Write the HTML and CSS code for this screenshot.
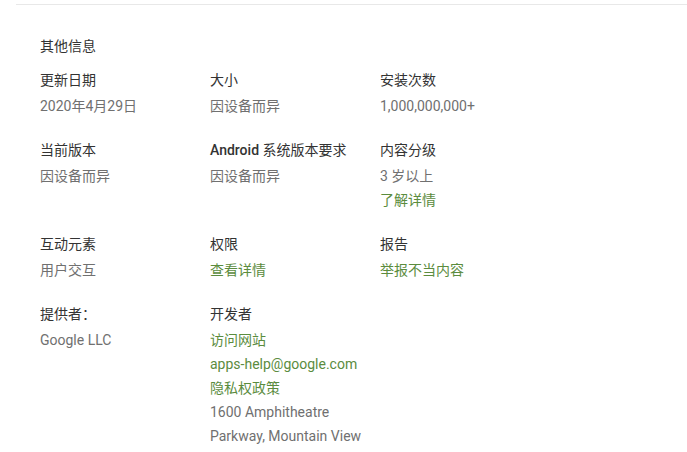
FILE: index.html
```html
<!DOCTYPE html>
<html lang="zh-CN">
<head>
    <meta charset="UTF-8">
    <title>其他信息</title>
    <link rel="stylesheet" href="styles.css">
</head>
<body>
    <div class="divider"></div>

    <div class="info-section">
        <h2>其他信息</h2>

        <div class="info-grid">
            <div class="info-item">
                <div class="label">更新日期</div>
                <div class="value">2020年4月29日</div>
            </div>
            <div class="info-item">
                <div class="label">大小</div>
                <div class="value">因设备而异</div>
            </div>
            <div class="info-item">
                <div class="label">安装次数</div>
                <div class="value">1,000,000,000+</div>
            </div>

            <div class="info-item">
                <div class="label">当前版本</div>
                <div class="value">因设备而异</div>
            </div>
            <div class="info-item">
                <div class="label"><span class="latin">Android</span> 系统版本要求</div>
                <div class="value">因设备而异</div>
            </div>
            <div class="info-item">
                <div class="label">内容分级</div>
                <div class="value">3 岁以上</div>
                <div class="value"><a href="#">了解详情</a></div>
            </div>

            <div class="info-item">
                <div class="label">互动元素</div>
                <div class="value">用户交互</div>
            </div>
            <div class="info-item">
                <div class="label">权限</div>
                <div class="value"><a href="#">查看详情</a></div>
            </div>
            <div class="info-item">
                <div class="label">报告</div>
                <div class="value"><a href="#">举报不当内容</a></div>
            </div>

            <div class="info-item">
                <div class="label">提供者：</div>
                <div class="value">Google LLC</div>
            </div>
            <div class="info-item">
                <div class="label">开发者</div>
                <div class="value"><a href="#">访问网站</a></div>
                <div class="value"><a href="#">apps-help@google.com</a></div>
                <div class="value"><a href="#">隐私权政策</a></div>
                <div class="value">1600 Amphitheatre<br>Parkway, Mountain View</div>
            </div>
        </div>
    </div>
</body>
</html>
```

FILE: styles.css
```css
body {
    font-family: Roboto, "Noto Sans CJK SC", sans-serif;
    font-size: 14px;
    line-height: 24px;
    margin: 0;
    padding: 0;
    background-color: #fff;
    color: #333;
}

.divider {
    margin-top: 4px;
    margin-left: 16px;
    border-top: 1px solid #e8e8e8;
}

.info-section {
    padding-left: 40px;
}

h2 {
    font-size: 14px;
    font-weight: 400;
    line-height: 24px;
    margin: 29px 0 10px 0;
    color: #333;
}

.info-grid {
    display: grid;
    grid-template-columns: 170px 170px 170px;
    row-gap: 20px;
}

.label {
    font-weight: 400;
    color: #333;
    margin-bottom: 2px;
}

.label .latin {
    font-weight: 500;
}

.value {
    color: #707070;
}

a {
    color: #5b8c3e;
    text-decoration: none;
}
```
